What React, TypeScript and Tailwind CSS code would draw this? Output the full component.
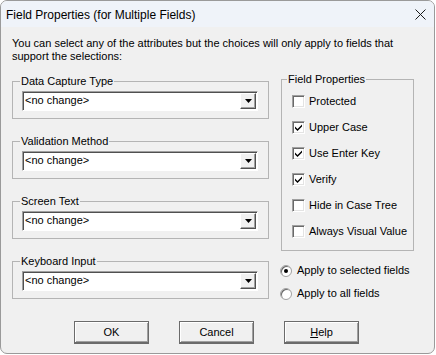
import React from "react";

const FONT = { fontFamily: '"Liberation Sans", Arial, sans-serif' };

function Combo() {
  return (
    <div className="flex h-[20px] items-stretch bg-white border border-t-[#a0a0a0] border-l-[#a0a0a0] border-r-white border-b-white shadow-[inset_1px_1px_0_#505050]">
      <div className="flex-1 pl-[2px] pt-[2px] leading-[13px]">&lt;no change&gt;</div>
      <div className="m-[1px] w-[16px] flex items-center justify-center bg-[#f0f0f0] border border-t-white border-l-white border-r-[#505050] border-b-[#505050] shadow-[inset_-1px_-1px_0_#a0a0a0]">
        <svg width="7" height="4" viewBox="0 0 7 4">
          <path d="M0 0h7L3.5 4z" fill="#000" />
        </svg>
      </div>
    </div>
  );
}

function Group({ label }: { label: string }) {
  return (
    <fieldset className="border border-[#b4b4b4] px-0 pb-[7px] pt-[3px] m-0">
      <legend className="px-[1px] ml-[7px] leading-[13px]">{label}</legend>
      <div className="pl-[9px] pr-[10px]">
        <Combo />
      </div>
    </fieldset>
  );
}

function Check({ label, on }: { label: string; on?: boolean }) {
  return (
    <div className="flex items-center h-[26px]">
      <div className="w-[13px] h-[13px] bg-white border border-t-[#a0a0a0] border-l-[#a0a0a0] border-r-white border-b-white shadow-[inset_1px_1px_0_#696969,inset_-1px_-1px_0_#e3e3e3] flex items-center justify-center">
        {on && (
          <svg width="7" height="7" viewBox="0 0 7 7">
            <path d="M0 2.5l2.5 2.5L7 0.5v2L2.5 7L0 4.5z" fill="#000" />
          </svg>
        )}
      </div>
      <span className="ml-[4px] leading-[13px]">{label}</span>
    </div>
  );
}

function Radio({ label, on }: { label: string; on?: boolean }) {
  return (
    <div className="flex items-center h-[23px]">
      <div className="w-[12px] h-[12px] rounded-full bg-white border border-[#a0a0a0] shadow-[inset_1px_1px_0_#696969] flex items-center justify-center">
        {on && <div className="w-[4px] h-[4px] rounded-full bg-black" />}
      </div>
      <span className="ml-[5px] leading-[13px]">{label}</span>
    </div>
  );
}

function Btn({ children }: { children: React.ReactNode }) {
  return (
    <div className="w-[75px] h-[23px] flex items-center justify-center bg-[#f0f0f0] border border-[#6b6b6b] border-b-2 shadow-[inset_1px_1px_0_#fff,inset_-1px_-1px_0_#a0a0a0]">
      {children}
    </div>
  );
}

export default function App() {
  return (
    <div className="w-[436px] h-[355px] bg-white">
      <div
        className="w-[435px] h-[354px] flex flex-col rounded-[7px] overflow-hidden border border-[#9a9a9a] bg-[#f0f0f0] text-[11px] text-black"
        style={FONT}
      >
        <div className="h-[26px] shrink-0 bg-[#eff3f9] flex items-center justify-between pl-[5px] pr-[8px]">
          <span className="text-[12px] leading-[14px] pt-[2px]">Field Properties (for Multiple Fields)</span>
          <svg width="11" height="11" viewBox="0 0 11 11">
            <path d="M0.5 0.5l10 10M10.5 0.5l-10 10" stroke="#1a1a1a" strokeWidth="1" />
          </svg>
        </div>
        <div className="px-[11px] pt-[10px]">
          <p className="leading-[13px] w-[400px]">
            You can select any of the attributes but the choices will only apply to fields that support the selections:
          </p>
          <div className="flex gap-[12px] mt-[10px]">
            <div className="w-[257px] flex flex-col gap-[16px] mt-[2px]">
              <Group label="Data Capture Type" />
              <Group label="Validation Method" />
              <Group label="Screen Text" />
              <Group label="Keyboard Input" />
            </div>
            <div className="w-[133px] flex flex-col">
              <fieldset className="border border-[#b4b4b4] h-[178px] px-0 pt-[2px] m-0">
                <legend className="ml-[5px] px-[1px] leading-[13px]">Field Properties</legend>
                <div className="pl-[10px]">
                  <Check label="Protected" />
                  <Check label="Upper Case" on />
                  <Check label="Use Enter Key" on />
                  <Check label="Verify" on />
                  <Check label="Hide in Case Tree" />
                  <Check label="Always Visual Value" />
                </div>
              </fieldset>
              <div className="mt-[8px] -ml-[1px]">
                <Radio label="Apply to selected fields" on />
                <Radio label="Apply to all fields" />
              </div>
            </div>
          </div>
          <div className="flex justify-center gap-[30px] mt-[16px] pr-[2px]">
            <Btn>OK</Btn>
            <Btn>Cancel</Btn>
            <Btn>
              <span>
                <span className="underline">H</span>elp
              </span>
            </Btn>
          </div>
        </div>
      </div>
    </div>
  );
}
